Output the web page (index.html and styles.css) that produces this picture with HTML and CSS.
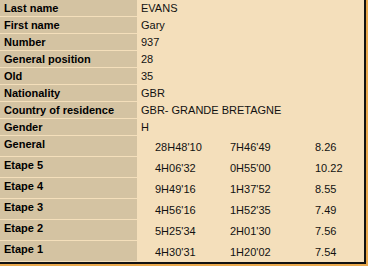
FILE: index.html
```html
<!DOCTYPE html>
<html>
<head>
<meta charset="utf-8">
<link rel="stylesheet" href="styles.css">
</head>
<body>
<div class="frame">
<table class="card">
  <tr><th>Last name</th><td>EVANS</td></tr>
  <tr><th>First name</th><td>Gary</td></tr>
  <tr><th>Number</th><td>937</td></tr>
  <tr><th>General position</th><td>28</td></tr>
  <tr><th>Old</th><td>35</td></tr>
  <tr><th>Nationality</th><td>GBR</td></tr>
  <tr><th>Country of residence</th><td>GBR- GRANDE BRETAGNE</td></tr>
  <tr><th>Gender</th><td>H</td></tr>
  <tr class="time"><th>General</th><td><div class="splits"><span>28H48'10</span><span>7H46'49</span><span>8.26</span></div></td></tr>
  <tr class="time"><th>Etape 5</th><td><div class="splits"><span>4H06'32</span><span>0H55'00</span><span>10.22</span></div></td></tr>
  <tr class="time"><th>Etape 4</th><td><div class="splits"><span>9H49'16</span><span>1H37'52</span><span>8.55</span></div></td></tr>
  <tr class="time"><th>Etape 3</th><td><div class="splits"><span>4H56'16</span><span>1H52'35</span><span>7.49</span></div></td></tr>
  <tr class="time"><th>Etape 2</th><td><div class="splits"><span>5H25'34</span><span>2H01'30</span><span>7.56</span></div></td></tr>
  <tr class="time"><th>Etape 1</th><td><div class="splits"><span>4H30'31</span><span>1H20'02</span><span>7.54</span></div></td></tr>
</table>
</div>
</body>
</html>
```

FILE: styles.css
```css
html, body {
  margin: 0;
  padding: 0;
  background: #e9a94e;
}
body {
  width: 368px;
  height: 266px;
  overflow: hidden;
}
.frame {
  width: 367px;
  margin-top: -1px;
  margin-left: -1px;
  background: #f4dfbb;
  border-right: 2px solid #111;
  border-bottom: 2px solid #111;
  box-sizing: border-box;
}
.card {
  width: 100%;
  border-collapse: separate;
  border-spacing: 1px;
  font-family: "Liberation Sans", Arial, sans-serif;
  font-size: 11px;
  line-height: 13px;
  color: #111;
}
.card th {
  width: 130px;
  background: #d4c3a2;
  text-align: left;
  font-weight: bold;
  color: #000;
  padding: 2px 3px 1px 4px;
  height: 13px;
  vertical-align: top;
  white-space: nowrap;
}
.card td {
  padding: 2px 3px 1px 3px;
  height: 13px;
  vertical-align: top;
  white-space: nowrap;
}
.card .time th {
  height: 17px;
}
.card .time td {
  padding-top: 5px;
  padding-bottom: 2px;
  height: 13px;
}
.splits {
  display: grid;
  grid-template-columns: 75px 85px auto;
  padding-left: 14px;
}
```
